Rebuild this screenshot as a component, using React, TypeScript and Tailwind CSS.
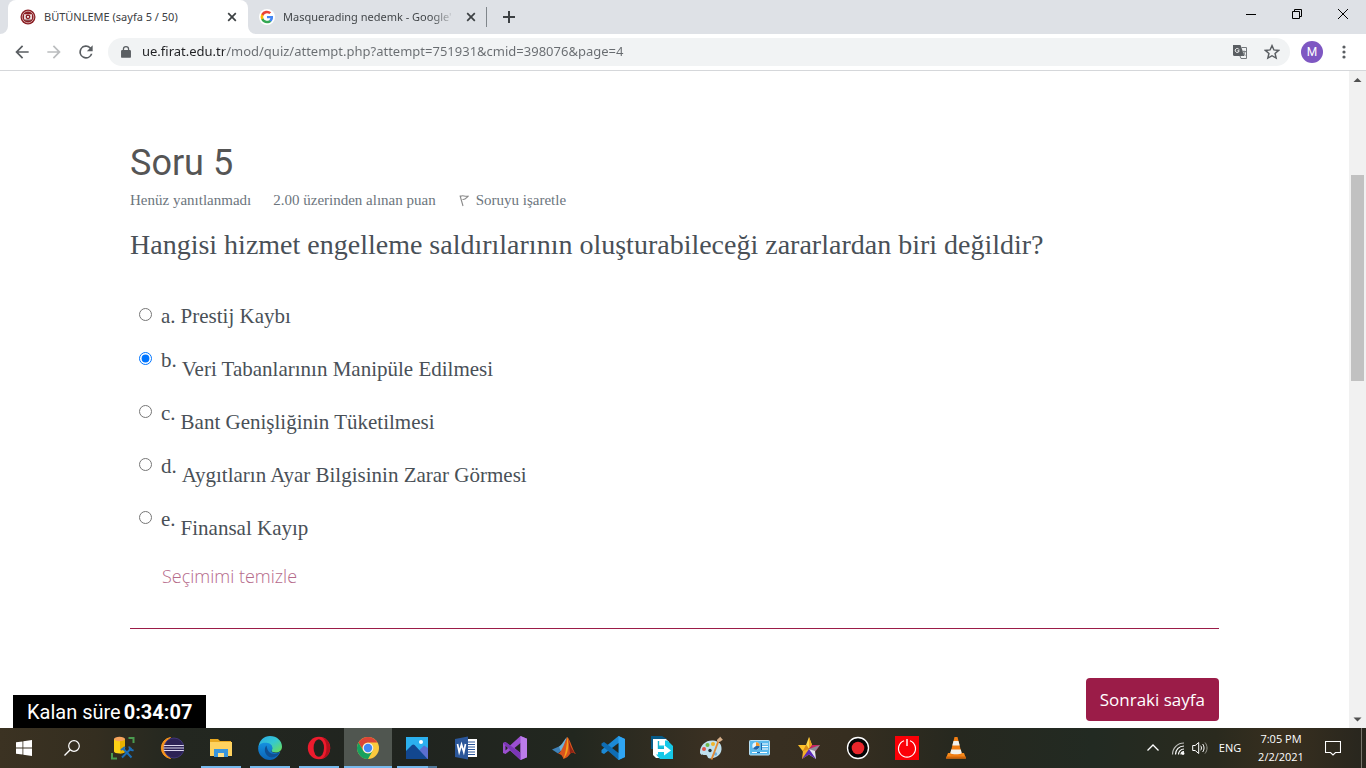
import { useState, type ReactNode } from "react";

type IconProps = { children: ReactNode; box?: number; className?: string };

function Icon({ children, box = 24, className = "size-6" }: IconProps) {
  return (
    <svg viewBox={`0 0 ${box} ${box}`} className={`shrink-0 ${className}`} fill="none" aria-hidden="true">
      {children}
    </svg>
  );
}

function CrestIcon() {
  return (
    <Icon box={16} className="size-4">
      <circle cx="8" cy="8" r="7.500" fill="#8b1f24" />
      <circle cx="8" cy="8" r="5.800" stroke="#d9b5b5" strokeWidth="0.800" />
      <path d="M4 5.200h8v4.300L10.500 12h-5L4 9.500z" fill="#ead8d8" />
      <circle cx="8" cy="7.800" r="2.400" fill="#8b1f24" />
      <path d="M7 7h2v1.700H7z" fill="#f1e4e4" />
      <path d="M5 11.200h6" stroke="#5f1015" />
    </Icon>
  );
}

function GoogleIcon() {
  return (
    <Icon box={16} className="size-4">
      <circle cx="8" cy="8" r="8" fill="#fff" />
      <g transform="translate(1.600 1.600) scale(.53)">
        <path fill="#4285F4" d="M23.500 12.300c0-.8-.1-1.600-.2-2.300H12v4.500h6.500a5.500 5.500 0 0 1-2.400 3.600v3h3.900c2.300-2.100 3.500-5.200 3.500-8.800z" />
        <path fill="#34A853" d="M12 24c3.200 0 6-1.100 8-2.900l-3.900-3a7.200 7.200 0 0 1-10.800-3.800h-4v3.100A12 12 0 0 0 12 24z" />
        <path fill="#FBBC05" d="M5.300 14.300a7.200 7.200 0 0 1 0-4.600V6.600h-4a12 12 0 0 0 0 10.800z" />
        <path fill="#EA4335" d="M12 4.800c1.800 0 3.300.6 4.600 1.800l3.400-3.400A12 12 0 0 0 1.300 6.600l4 3.100A7.200 7.200 0 0 1 12 4.800z" />
      </g>
    </Icon>
  );
}

function CloseIcon() {
  return (
    <Icon box={16} className="size-4">
      <path d="M4.200 4.200l7.600 7.600M11.800 4.200l-7.600 7.600" stroke="#3c4043" strokeWidth="1.700" />
    </Icon>
  );
}

function TabFoot({ flip = false }: { flip?: boolean }) {
  return (
    <svg viewBox="0 0 8 8" className={flip ? "size-2 shrink-0 self-end -scale-x-100" : "size-2 shrink-0 self-end"} aria-hidden="true">
      <path d="M8 0v8H0a8 8 0 0 0 8-8z" fill="#fff" />
    </svg>
  );
}

function TabStrip() {
  return (
    <header className="flex h-[34px] shrink-0 bg-[#dee1e6] font-['Segoe_UI','Noto_Sans',sans-serif] text-[11px] text-[#3c4043]">
      <TabFoot />
      <div className="flex w-60 items-center rounded-t-lg bg-white pr-2 pl-3">
        <CrestIcon />
        <span className="ml-2 flex-1 whitespace-nowrap">BÜTÜNLEME (sayfa 5 / 50)</span>
        <button type="button" aria-label="Sekmeyi kapat"><CloseIcon /></button>
      </div>
      <TabFoot flip />
      <div className="flex w-[230px] items-center pr-[7px] pl-[3px]">
        <GoogleIcon />
        <span className="ml-2 flex-1 whitespace-nowrap">
          <span className="bg-[linear-gradient(90deg,#3c4043_88%,#c6c9cd)] bg-clip-text text-transparent">Masquerading nedemk - Google'</span>
        </span>
        <button type="button" aria-label="Sekmeyi kapat"><CloseIcon /></button>
      </div>
      <div className="h-5 w-px self-center bg-[#80868b]" />
      <button type="button" aria-label="Yeni sekme" className="ml-[14px]">
        <Icon box={16} className="size-4">
          <path d="M8 2v12M2 8h12" stroke="#3c4043" strokeWidth="2" />
        </Icon>
      </button>
      <div className="ml-auto flex">
        <button type="button" aria-label="Simge durumuna küçült" className="flex h-7 w-[46px] items-center justify-center">
          <Icon box={10} className="size-[10px]"><path d="M0 5.500h10" stroke="#000" /></Icon>
        </button>
        <button type="button" aria-label="Geri yükle" className="flex h-7 w-[46px] items-center justify-center">
          <Icon box={10} className="size-[10px]">
            <path d="M.5 2.500h7v7h-7zM2.500 2.500v-2h7v7h-2" stroke="#000" />
          </Icon>
        </button>
        <button type="button" aria-label="Kapat" className="flex h-7 w-[46px] items-center justify-center">
          <Icon box={10} className="size-[10px]"><path d="M0 0l10 10M10 0L0 10" stroke="#000" /></Icon>
        </button>
      </div>
    </header>
  );
}

function Toolbar() {
  return (
    <nav className="flex h-[37px] shrink-0 items-center border-b border-[#d5d7da] bg-white">
      <button type="button" aria-label="Geri" className="flex w-8 justify-center pl-3">
        <Icon className="size-5"><path d="M20 11H7.830l5.590-5.590L12 4l-8 8 8 8 1.410-1.410L7.830 13H20z" fill="#5a5e62" /></Icon>
      </button>
      <button type="button" aria-label="İleri" className="flex w-8 justify-center pl-3">
        <Icon className="size-5"><path d="M4 13h12.170l-5.590 5.590L12 20l8-8-8-8-1.410 1.410L16.170 11H4z" fill="#bbbdbf" /></Icon>
      </button>
      <button type="button" aria-label="Yenile" className="flex w-8 justify-center pl-3">
        <Icon className="size-5">
          <path d="M17.650 6.350A8 8 0 1 0 19.730 14h-2.080A6 6 0 1 1 12 6c1.660 0 3.140.690 4.220 1.780L13 11h7V4z" fill="#5a5e62" />
        </Icon>
      </button>
      <div className="ml-3 flex h-7 flex-1 items-center rounded-full bg-[#f1f3f4] pr-[10px] pl-[11px]">
        <Icon className="size-[14px]">
          <path d="M18.500 8.500h-1V7a5.500 5.500 0 0 0-11 0v1.500h-1a2 2 0 0 0-2 2V20a2 2 0 0 0 2 2h13a2 2 0 0 0 2-2v-9.500a2 2 0 0 0-2-2zM8.700 7a3.300 3.300 0 0 1 6.600 0v1.500H8.700z" fill="#5a5e62" />
        </Icon>
        <input
          aria-label="Adres çubuğu"
          defaultValue="ue.firat.edu.tr/mod/quiz/attempt.php?attempt=751931&cmid=398076&page=4"
          className="ml-[9px] min-w-0 flex-1 bg-[linear-gradient(90deg,#202124_82px,#686c70_82px)] bg-clip-text font-['Segoe_UI','Noto_Sans',sans-serif] text-[13px] text-transparent outline-none"
        />
        <button type="button" aria-label="Bu sayfayı çevir">
          <Icon box={16} className="size-4">
            <path d="M1 1h7.500l4 11H2.500A1.500 1.500 0 0 1 1 10.500z" fill="#5a5e62" />
            <path d="M7 5.500a2 2 0 1 0 .200 1.300H5.500" stroke="#fff" strokeWidth="1" />
            <path d="M9.500 3.500h5v11H9l-1-2.500" stroke="#74787c" />
            <path d="M10 7.500h4M12 6.500v1M13.200 7.500c-.4 1.700-1.300 2.900-2.600 3.800M11 8.500l2.500 3" stroke="#74787c" strokeWidth=".9" />
          </Icon>
        </button>
        <button type="button" aria-label="Yer işareti ekle" className="ml-4">
          <Icon className="size-4">
            <path d="M12 2.500l2.900 6.400 7 .700-5.300 4.700 1.600 6.900L12 17.600l-6.200 3.600 1.600-6.900-5.300-4.700 7-.700z" stroke="#5a5e62" strokeWidth="2.200" />
          </Icon>
        </button>
      </div>
      <button type="button" aria-label="Profil" className="ml-[11px] flex size-[22px] items-center justify-center rounded-full bg-[#7e57c2] font-['Roboto',sans-serif] text-xs text-white">
        M
      </button>
      <button type="button" aria-label="Menü" className="mr-[14px] ml-[13px]">
        <Icon box={16} className="size-4">
          <g fill="#5a5e62"><circle cx="8" cy="3" r="1.600" /><circle cx="8" cy="8" r="1.600" /><circle cx="8" cy="13" r="1.600" /></g>
        </Icon>
      </button>
    </nav>
  );
}

const options = [
  { letter: "a.", text: "Prestij Kaybı", block: false },
  { letter: "b.", text: "Veri Tabanlarının Manipüle Edilmesi", block: true },
  { letter: "c.", text: "Bant Genişliğinin Tüketilmesi", block: true },
  { letter: "d.", text: "Aygıtların Ayar Bilgisinin Zarar Görmesi", block: true },
  { letter: "e.", text: "Finansal Kayıp", block: true },
];

function Question() {
  const [selected, setSelected] = useState("b.");
  return (
    <main className="min-w-0 flex-1 overflow-hidden px-[130px] pt-[68px] font-['Georgia','Liberation_Serif',serif] text-[#495057]">
      <h1 className="font-['Roboto',sans-serif] text-4xl leading-[48px] text-[#555]">Soru 5</h1>
      <div className="flex h-[26px] items-center text-[15px] text-[#6c757d]">
        <span>Henüz yanıtlanmadı</span>
        <span className="ml-[22px]">2.00 üzerinden alınan puan</span>
        <button type="button" className="ml-[22px] flex items-center gap-1">
          <Icon box={14} className="size-[14px]">
            <path d="M2 2.500l3 10.500M2.500 3.500c2-2 4 .5 8-.5-2 1.500-3 4-6 3.500" stroke="#8a8a8a" strokeWidth="1.100" />
          </Icon>
          Soruyu işaretle
        </button>
      </div>
      <p className="mt-3 text-[28px] leading-10">
        Hangisi hizmet engelleme saldırılarının oluşturabileceği zararlardan biri değildir?
      </p>
      <fieldset className="mt-9 flex flex-col gap-[14px] pl-[9px] text-[21px] leading-[30px]">
        {options.map((o, i) => (
          <div key={o.letter} className="flex items-start">
            <input
              type="radio"
              id={`answer-${i}`}
              name="answer"
              checked={selected === o.letter}
              onChange={() => setSelected(o.letter)}
              className="mt-[7px] size-[13px]"
            />
            <label htmlFor={`answer-${i}`} className="ml-[9px] flex gap-[5px]">
              <span>{o.letter}</span>
              <span className={o.block ? "pt-[9px]" : ""}>{o.text}</span>
            </label>
          </div>
        ))}
      </fieldset>
      <a
        href="#clear"
        onClick={(e) => { e.preventDefault(); setSelected(""); }}
        className="mt-[18px] ml-8 block w-fit font-['Segoe_UI','Open_Sans',sans-serif] text-lg leading-[30px] font-light text-[#b56a8a]"
      >
        Seçimimi temizle
      </a>
      <div className="mt-[37px] border-t border-[#9b1c48]" />
      <div className="mt-[49px] flex justify-end">
        <button type="button" className="h-[43px] rounded bg-[#9b1c48] px-[14px] font-['Segoe_UI','Open_Sans',sans-serif] text-[17px] text-white">
          Sonraki sayfa
        </button>
      </div>
    </main>
  );
}

function Scrollbar() {
  return (
    <div className="flex w-[17px] shrink-0 flex-col items-center bg-[#f1f1f1]" aria-hidden="true">
      <Icon box={17} className="size-[17px]"><path d="M4.500 11L8.500 7l4 4z" fill="#505050" /></Icon>
      <div className="flex w-full flex-1 flex-col items-center">
        <div className="h-[14%]" />
        <div className="h-[33%] w-[13px] bg-[#c1c1c1]" />
      </div>
      <Icon box={17} className="size-[17px]"><path d="M4.500 6.500l4 4 4-4z" fill="#505050" /></Icon>
    </div>
  );
}

type App = { name: string; state?: "open" | "active" | "stacked"; art: ReactNode };

const apps: App[] = [
  {
    name: "SQL Server Management Studio",
    art: (
      <>
        <path d="M3 3v12.500c0 1.200 2.500 2 5.500 2s5.500-.8 5.500-2V3z" fill="#fcd116" />
        <path d="M9 3v14.500c3 0 5-.8 5-2V3z" fill="#e8b300" />
        <ellipse cx="8.500" cy="3" rx="5.500" ry="2.200" fill="#f6a35c" />
        <path d="M17.500 2h5v5M1 17v5.500h5" stroke="#4b9b4f" strokeWidth="2" />
        <path d="M12 12.500l8.500 9M20.500 12l-9.500 9.500" stroke="#1c6fba" strokeWidth="2" />
        <path d="M10 14l4-3M18.500 10.500a3 3 0 0 0 4 3.500" stroke="#1c6fba" strokeWidth="2" />
      </>
    ),
  },
  {
    name: "Eclipse",
    art: (
      <>
        <path d="M10.500 1.500A10.600 10.600 0 0 0 10.500 22.500 12.500 12.500 0 0 1 10.500 1.500z" fill="#f7941e" stroke="#f7941e" />
        <circle cx="14" cy="12" r="10" fill="#2c2255" stroke="#463a86" strokeWidth=".8" />
        <path d="M3.800 9.500h20M3.500 12h21M3.800 14.500h20" stroke="#dcd7ee" strokeWidth="1.200" />
      </>
    ),
  },
  {
    name: "Dosya Gezgini",
    state: "open",
    art: (
      <>
        <path d="M1 3h8l2 2h11v15H1z" fill="#e9a820" />
        <path d="M1 6h22v14H1z" fill="#ffd25f" />
        <path d="M5 21v-8h14v8h-4v-4H9v4z" fill="#3a96dd" />
        <path d="M9 17h6v4H9z" fill="#ffe08a" />
      </>
    ),
  },
  {
    name: "Microsoft Edge",
    state: "open",
    art: (
      <>
        <defs>
          <linearGradient id="edgeTop" x1="0" y1="0" x2="1" y2="1"><stop stopColor="#2aa8e8" /><stop offset=".5" stopColor="#35c8d0" /><stop offset="1" stopColor="#6fe04c" /></linearGradient>
          <linearGradient id="edgeLow" x1="0" y1="0" x2="0" y2="1"><stop stopColor="#1590df" /><stop offset="1" stopColor="#0b63b5" /></linearGradient>
        </defs>
        <path d="M.5 11C1 4.500 6 0 12 0c7 0 12 5 12 10.500 0 4-3 6-6.500 6-3 0-4.500-1.200-4-2.200 1.500-2 .5-6-4-6C5.500 8.300 1.500 9.500.5 11z" fill="url(#edgeTop)" />
        <path d="M.2 12C.5 8 4 6.500 8.500 6.800c3.500.2 6 2.700 6 5.400 0 1.200-.7 1.800-.9 2.300-.6 1 1.200 2.300 4 2.300 2 0 3.500-.5 4.700-1.300C20.500 20.800 16 24 12 24 5 24-.2 18 .2 12z" fill="url(#edgeLow)" />
        <path d="M8.500 9.500c-3 3-2 9.500 3 11.500 4 1.500 8.500-1 10-4.500-6 3-12 1.500-13-7z" fill="#0f4f93" />
      </>
    ),
  },
  {
    name: "Opera",
    state: "open",
    art: (
      <>
        <circle cx="12" cy="12" r="11.200" fill="#ec1b2d" />
        <path d="M15 1.200a11.200 11.200 0 0 1 0 21.600c3-2 4.500-6 4.500-10.800S18 3.200 15 1.200z" fill="#b3101c" />
        <ellipse cx="11.800" cy="12" rx="5.200" ry="8.700" fill="#20241e" />
      </>
    ),
  },
  {
    name: "Google Chrome",
    state: "active",
    art: (
      <>
        <circle cx="12" cy="12" r="11" fill="#fbc93d" />
        <path d="M2.470 6.500A11 11 0 0 1 21.500 6.500H12A5.500 5.500 0 0 0 7.240 14.750z" fill="#db4437" />
        <path d="M2.470 6.500l4.770 8.250A5.500 5.500 0 0 0 16.760 14.750L12 23A11 11 0 0 1 2.470 6.500z" fill="#17a05e" />
        <circle cx="12" cy="12" r="5.300" fill="#f1f1f1" />
        <circle cx="12" cy="12" r="4.200" fill="#4387f4" />
      </>
    ),
  },
  {
    name: "Fotoğraflar",
    state: "stacked",
    art: (
      <>
        <path d="M1 1h22v22H1z" fill="#2bb0ee" />
        <path d="M23 12l-4-2.500-5 5 8 8.500h1z" fill="#5b6fd0" />
        <path d="M1 15l6-6c.8-.8 1.800-.8 2.600 0L22.500 23H1z" fill="#12478f" />
        <circle cx="16" cy="6" r="2" fill="#fff" />
      </>
    ),
  },
  {
    name: "Microsoft Word",
    art: (
      <>
        <path d="M11 3h12v18H11z" fill="#fff" />
        <path d="M14 6h7M14 8.500h7M14 11h7M14 13.500h7M14 16h7M14 18.500h7" stroke="#2b579a" />
        <path d="M1 3l13-2.500v23L1 21z" fill="#2b579a" />
        <path d="M3.500 8l1.700 8 2.300-7.500L9.800 16l1.700-8" stroke="#fff" strokeWidth="1.700" />
      </>
    ),
  },
  {
    name: "Visual Studio",
    art: (
      <>
        <path d="M17.500 0L24 2.700v18.600L17.500 24 7 14.500 2.500 18 0 17V7l2.500-1L7 9.500zM17.500 7L11.500 12l6 5zM2.500 9.500v5L5 12z" fill="#9b4fd0" fillRule="evenodd" />
        <path d="M17.500 0L24 2.700v18.600L17.500 24z" fill="#bb7cea" />
        <path d="M0 7l2.500-1 15 11v7L0 7z" fill="#7b36b5" />
      </>
    ),
  },
  {
    name: "MATLAB",
    art: (
      <>
        <path d="M0 13.500l7-3 3.500 3L6 17.500z" fill="#3f82b8" />
        <path d="M7 10.500C10 9 12 4 15 1l-3.500 13.500L9 16z" fill="#6db3d9" />
        <path d="M6 17.500C10 17 13 4 15.500 1c3 3 5 13.500 8.500 17-3-1.500-4.500-2-6 0-1.500 2-3 4-6.500 5-1-3-2.500-5-5.500-5.500z" fill="#d9541e" />
        <path d="M15.500 1c-1 7-1 13-4 22 4-5 6-11 4-22z" fill="#f6a21a" />
        <path d="M16.500 3c1 6 4 12 7.500 15-3-1.500-4.500-2-6 0z" fill="#8f2415" />
      </>
    ),
  },
  {
    name: "Visual Studio Code",
    art: (
      <>
        <path d="M17.500 0L24 3v18l-6.500 3L7.500 14.500 3 18l-2.500-1.200V14L17.500 0z" fill="#1c8ad6" />
        <path d="M.5 7.500L3 6l15 11v7L.5 9.500z" fill="#0f6db4" />
        <path d="M17.500 0L24 3v18l-6.500 3z" fill="#2fa5f3" />
        <path d="M17.500 7L11 12l6.500 5z" fill="#222821" />
      </>
    ),
  },
  {
    name: "Free Download Manager",
    art: (
      <>
        <path d="M1 0h11l5 3H4v10H1z" fill="#075a87" />
        <path d="M3 3h13l3 3v16H6l-3-3z" fill="#fff" />
        <path d="M8 9.500h7V4.500h2.500L23 10v13H10l-4-4.500h9V21h.2L8 20.500z" fill="#16c8e8" />
        <path d="M7.500 6.500v6H14V9l7 5.500-7 5V16H7.500z" fill="#fff" />
        <path d="M8.500 5v7.300H14" stroke="#16b0cc" strokeWidth="1.400" />
      </>
    ),
  },
  {
    name: "Paint",
    art: (
      <>
        <path d="M1 16C1 9 7 4 14 4.500c6 .500 9 4 8.500 9C22 19 17 22.500 11 22.500c-3 0-2-3-4-3.500-2-.5-6 1-6-3z" fill="#bfe0ef" />
        <circle cx="5" cy="13" r="2" fill="#e0544a" /><circle cx="8.500" cy="9" r="2" fill="#6fb84a" /><circle cx="14" cy="8" r="2" fill="#f0b429" /><circle cx="11" cy="14.500" r="1.700" fill="#23323a" /><circle cx="16.500" cy="18" r="1.700" fill="#6fb0e0" />
        <path d="M19.500 5l-7 18.500" stroke="#e08a38" strokeWidth="1.900" />
        <path d="M18 5c0-2.500 2.500-2.500 3-4.500L24 4c-1.500 0-2 2-4.500 2z" fill="#d9b08a" />
      </>
    ),
  },
  {
    name: "Denetim Masası",
    art: (
      <>
        <rect x="1.500" y="4.500" width="20" height="14.500" rx=".8" fill="#5bb9ec" stroke="#b8e0f5" />
        <circle cx="8" cy="10" r="3.700" fill="#eaf6fd" />
        <path d="M8 10V6.300a3.700 3.700 0 0 1 3.700 3.700z" fill="#f29a2e" /><path d="M8 10h3.700A3.700 3.700 0 0 1 5 12.200z" fill="#2167ad" />
        <path d="M14 8h6M14 10.500h6M14 13h6M4 16.500h15" stroke="#fff" strokeWidth="1.200" />
        <path d="M13.500 7v7M9 16.500h3" stroke="#2167ad" />
      </>
    ),
  },
  {
    name: "Star",
    art: (
      <>
        <path d="M12 1l3 8-3 4L9 9z" fill="#ffd84a" /><path d="M12 1l3 8-3 4z" fill="#f0a31c" />
        <path d="M1 9h8l3 4-6 2.500z" fill="#ffc22b" /><path d="M9 9l3 4-6.500 2.500z" fill="#d98b16" />
        <path d="M23 9h-8l-3 4 6.500 2.500z" fill="#c72563" /><path d="M23 9l-11 4 6 2.500z" fill="#8c8c96" />
        <path d="M5 23l1-8 6-2v5.500z" fill="#f3b02a" /><path d="M12 13v5.500L5 23z" fill="#5a2ab8" />
        <path d="M19 23l-1-8-6-2v5.500z" fill="#e8e8ee" /><path d="M12 13v5.500l7 4.500z" fill="#5a2ab8" />
      </>
    ),
  },
  {
    name: "Ekran Kaydedici",
    art: (
      <>
        <circle cx="12" cy="12" r="10.500" fill="#050505" stroke="#fff" strokeWidth="1.300" />
        <circle cx="12" cy="12" r="6.300" fill="#e8262b" />
      </>
    ),
  },
  {
    name: "Bilgisayarı Kapat",
    art: (
      <>
        <path d="M0 0h24v24H0z" fill="#fb0007" />
        <path d="M9 4.700a8.500 8.500 0 1 0 6 0" stroke="#fff" strokeWidth="1.200" />
        <path d="M12 3v7" stroke="#fff" strokeWidth="1.400" />
      </>
    ),
  },
  {
    name: "VLC",
    art: (
      <>
        <path d="M4 17h16l2 5.500H2z" fill="#f58a1c" />
        <path d="M10.500 1h3L18 19c-2 2-10 2-12 0z" fill="#f07d13" />
        <path d="M9.500 5h5l1.200 4.500H8.300zM7.200 13.500h9.600l1 3.700c-2 1.300-9.600 1.300-11.600 0z" fill="#f1f1ee" />
        <path d="M2 22.500h20l-.3-2H2.300z" fill="#cf640a" />
      </>
    ),
  },
];

function AppButton({ app }: { app: App }) {
  const tone = app.state === "active" ? "bg-[#505650]" : "";
  return (
    <button type="button" aria-label={app.name} className={`flex w-12 shrink-0 flex-col items-center ${tone}`}>
      <span className="flex flex-1 items-center pt-[2px]"><Icon>{app.art}</Icon></span>
      {app.state === "active" && <span className="h-[2px] w-full bg-[#76b9ed]" />}
      {app.state === "open" && <span className="h-[2px] w-10 bg-[#76b9ed]" />}
      {app.state === "stacked" && (
        <span className="flex h-[2px] w-10"><span className="w-[31px] bg-[#76b9ed]" /><span className="flex-1 bg-[#51799a]" /></span>
      )}
      {!app.state && <span className="h-[2px]" />}
    </button>
  );
}

function Taskbar() {
  return (
    <footer className="flex h-10 shrink-0 bg-[linear-gradient(90deg,#3b3222_0%,#342e20_7%,#232720_13%,#20241f_30%,#22271f_42%,#3a3022_52%,#362e20_62%,#26281f_70%,#222a22_80%,#2a2a1e_89%,#382f1f_94%,#28261e_100%)] text-[11px] text-white">
      <button type="button" aria-label="Başlat" className="flex w-12 items-center justify-center">
        <Icon box={16} className="size-4"><path d="M0 2.300L6.500 1.400v6.200H0zM7.300 1.300L16 0v7.600H7.300zM0 8.400h6.500v6.200L0 13.700zM7.300 8.400H16V16l-8.700-1.300z" fill="#fff" /></Icon>
      </button>
      <button type="button" aria-label="Ara" className="flex w-12 items-center justify-center">
        <Icon box={16} className="size-4"><circle cx="10" cy="6" r="5.300" stroke="#fff" strokeWidth="1.200" /><path d="M6.200 9.800L.5 15.500" stroke="#fff" strokeWidth="1.300" /></Icon>
      </button>
      <div className="ml-[3px] flex gap-px">
        {apps.map((app) => <AppButton key={app.name} app={app} />)}
      </div>
      <div className="ml-auto flex items-center">
        <button type="button" aria-label="Gizli simgeler">
          <Icon box={14} className="size-[14px]"><path d="M1.500 9.500L7 4l5.500 5.500" stroke="#fff" strokeWidth="1.300" /></Icon>
        </button>
        <button type="button" aria-label="Ağ" className="ml-[10px]">
          <Icon box={16} className="size-4">
            <g stroke="#fff" strokeWidth="1.200">
              <path d="M2.500 14.500C2.500 8 7.500 3 14 3" opacity=".7" /><path d="M5.500 14.500C5.500 9.700 9.200 6 14 6" /><path d="M8.500 14.500C8.500 11.400 10.900 9 14 9" /><path d="M11 14.500c0-1.700 1.300-3 3-3" />
            </g>
            <circle cx="13" cy="13.500" r="1.400" fill="#fff" />
          </Icon>
        </button>
        <button type="button" aria-label="Ses" className="ml-[6px]">
          <Icon box={16} className="size-4">
            <path d="M.7 5.500h2.500l3.500-3v11l-3.500-3H.7z" stroke="#fff" />
            <path d="M8.700 5.700c1 1.300 1 3.300 0 4.600M10.700 4c1.800 2.300 1.800 5.700 0 8" stroke="#fff" />
            <path d="M13 2.500c2.700 3.200 2.700 7.800 0 11" stroke="#9a9a92" />
          </Icon>
        </button>
        <button type="button" className="ml-[10px] w-6 text-center">ENG</button>
        <button type="button" className="ml-[10px] w-[58px] text-center leading-[18px]">
          <span className="block">7:05 PM</span>
          <span className="block">2/2/2021</span>
        </button>
        <button type="button" aria-label="Bildirimler" className="ml-[15px]">
          <Icon box={16} className="size-4"><path d="M.5 1.500h15v11h-5L8 15l-2.500-2.500h-5z" stroke="#fff" strokeWidth="1.100" /></Icon>
        </button>
        <div className="mr-1 ml-5 h-10 w-px bg-[#77756c]" />
      </div>
    </footer>
  );
}

export default function App() {
  return (
    <div className="flex h-screen flex-col bg-white font-['Segoe_UI','Open_Sans',sans-serif]">
      <TabStrip />
      <Toolbar />
      <div className="relative flex min-h-0 flex-1">
        <Question />
        <Scrollbar />
        <div role="timer" className="absolute bottom-0 left-[13px] flex h-[33px] items-center gap-[3px] bg-black px-[14px] font-['Roboto',sans-serif] text-xl text-white">
          Kalan süre <strong className="font-bold">0:34:07</strong>
        </div>
      </div>
      <Taskbar />
    </div>
  );
}
